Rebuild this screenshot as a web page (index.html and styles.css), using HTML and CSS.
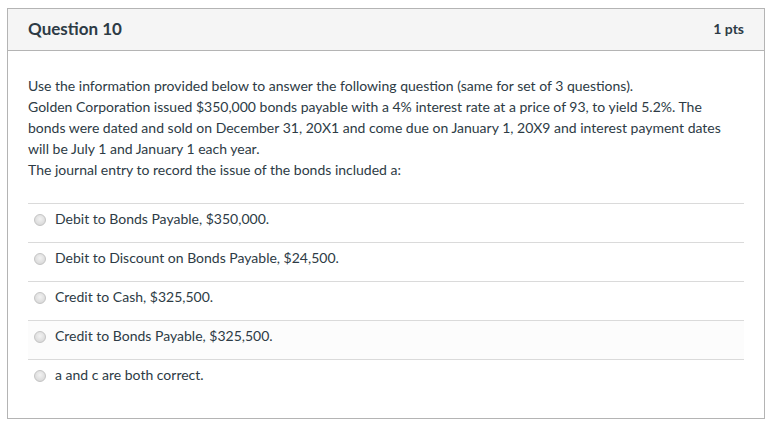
FILE: index.html
```html
<!DOCTYPE html>
<html>
<head>
<meta charset="utf-8">
<link rel="stylesheet" href="styles.css">
</head>
<body>
<div class="question">
  <div class="q-header">
    <span class="q-title">Question 10</span>
    <span class="q-pts">1 pts</span>
  </div>
  <div class="q-body">
    <div class="q-text">
      Use the information provided below to answer the following question (same for set of 3 questions).<br>
      Golden Corporation issued $350,000 bonds payable with a 4% interest rate at a price of 93, to yield 5.2%. The bonds were dated and sold on December 31, 20X1 and come due on January 1, 20X9 and interest payment dates will be July 1 and January 1 each year.<br>
      The journal entry to record the issue of the bonds included a:
    </div>
    <div class="answers">
      <div class="answer"><span class="radio"></span><span class="a-text">Debit to Bonds Payable, $350,000.</span></div>
      <div class="answer"><span class="radio"></span><span class="a-text">Debit to Discount on Bonds Payable, $24,500.</span></div>
      <div class="answer"><span class="radio"></span><span class="a-text">Credit to Cash, $325,500.</span></div>
      <div class="answer hover"><span class="radio"></span><span class="a-text">Credit to Bonds Payable, $325,500.</span></div>
      <div class="answer"><span class="radio"></span><span class="a-text">a and c are both correct.</span></div>
    </div>
  </div>
</div>
</body>
</html>
```
FILE: styles.css
```css
html, body {
  margin: 0;
  padding: 0;
  background: #ffffff;
}
body {
  padding: 8px 0 0 7px;
  font-family: Lato, "Open Sans", sans-serif;
  color: #2d3b45;
}
.question {
  width: 756px;
  border: 1px solid #b4b4b4;
  background: #ffffff;
}
.q-header {
  display: flex;
  justify-content: space-between;
  align-items: center;
  height: 41px;
  padding: 0 20px;
  background: #f5f5f5;
  border-bottom: 1px solid #b4b4b4;
}
.q-title {
  font-size: 17px;
  font-weight: 700;
  margin-top: -2px;
}
.q-pts {
  font-size: 14px;
  font-weight: 700;
  margin-top: -2px;
}
.q-body {
  padding: 24px 20px 20px 20px;
}
.q-text {
  font-size: 14px;
  line-height: 21px;
  padding-right: 10px;
}
.answers {
  margin-top: 23px;
}
.answer {
  display: flex;
  align-items: flex-start;
  height: 34px;
  padding-top: 4px;
  border-top: 1px solid #dadada;
  font-size: 14px;
  line-height: 21px;
}
.answer.hover {
  background: #fcfcfc;
}
.radio {
  width: 12px;
  height: 12px;
  box-sizing: border-box;
  margin: 6px 9px 0 6px;
  border-radius: 50%;
  border: 1px solid #c4c4c4;
  background: radial-gradient(circle at 50% 40%, #f2f2f2 0%, #dcdcdc 70%, #cfcfcf 100%);
}
```
